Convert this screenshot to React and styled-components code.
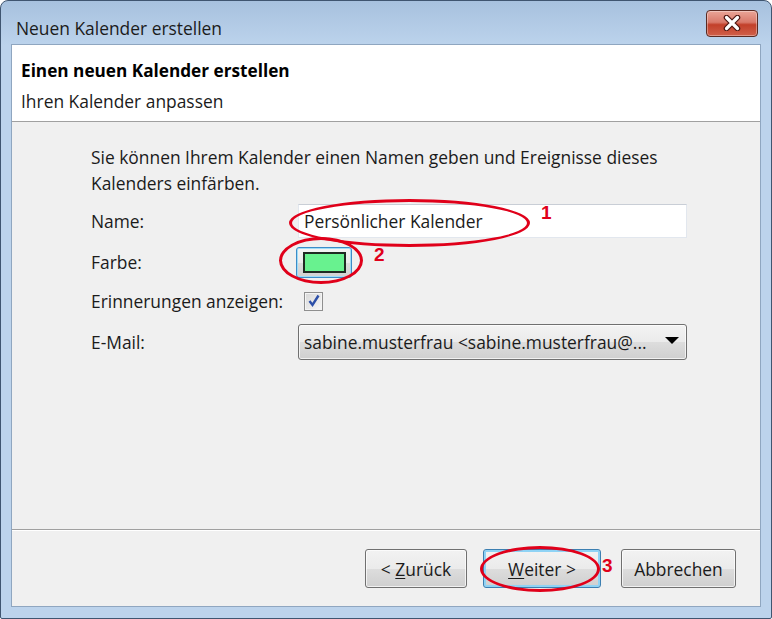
import React from 'react';
import styled, { createGlobalStyle } from 'styled-components';

const GlobalStyle = createGlobalStyle`
  html, body {
    margin: 0;
    padding: 0;
    background: #ffffff;
  }
  body {
    font-family: "Open Sans", "Noto Sans", sans-serif;
  }
`;

function App() {
  return (
    <>
      <GlobalStyle />
      <Window>
        <TitleBar>
          <Caption>Neuen Kalender erstellen</Caption>
          <CloseButton aria-label="Schließen">
            <svg width="18" height="16" viewBox="0 0 18 16">
              <path d="M3.5 2.5 L14.5 13.5 M14.5 2.5 L3.5 13.5" stroke="#4a1510" strokeWidth="5.5" strokeLinecap="round" />
              <path d="M3.5 2.5 L14.5 13.5 M14.5 2.5 L3.5 13.5" stroke="#ffffff" strokeWidth="3.2" strokeLinecap="round" />
            </svg>
          </CloseButton>
        </TitleBar>

        <Client>
          <Header>
            <HeaderTitle>Einen neuen Kalender erstellen</HeaderTitle>
            <HeaderSub>Ihren Kalender anpassen</HeaderSub>
          </Header>

          <Body>
            <Intro>
              Sie können Ihrem Kalender einen Namen geben und Ereignisse dieses
              <br />
              Kalenders einfärben.
            </Intro>
            <Form>
              <Label>Name:</Label>
              <TextInput defaultValue="Persönlicher Kalender" />

              <Label>Farbe:</Label>
              <ColorButton>
                <Swatch color="#68f28f" />
              </ColorButton>

              <Label>Erinnerungen anzeigen:</Label>
              <Checkbox>
                <svg width="14" height="14" viewBox="0 0 14 14">
                  <path d="M2.5 7 L5.5 11 L11.5 1.5" fill="none" stroke="#2c4fa8" strokeWidth="2.4" />
                </svg>
              </Checkbox>

              <Label>E-Mail:</Label>
              <Select>
                <span>sabine.musterfrau &lt;sabine.musterfrau@...</span>
                <Arrow />
              </Select>
            </Form>
          </Body>

          <Footer>
            <Button width={102}>
              {'< '}
              <u>Z</u>urück
            </Button>
            <Button width={118} focused>
              <u>W</u>eiter {'>'}
            </Button>
            <Button width={115} spaced>
              Abbrechen
            </Button>
          </Footer>
        </Client>

        <Ring left={288} top={198} w={241} h={48} />
        <Marker left={540} top={201}>1</Marker>
        <Ring left={278} top={236} w={84} h={47} />
        <Marker left={373} top={243}>2</Marker>
        <Ring left={479} top={545} w={120} h={46} />
        <Marker left={601} top={554}>3</Marker>
      </Window>
    </>
  );
}
export default App;

const Window = styled.div`
  position: relative;
  width: 772px;
  height: 619px;
  box-sizing: border-box;
  display: flex;
  flex-direction: column;
  background: linear-gradient(#a7c1de 0px, #bcd3ec 44px, #bcd3ec 100%);
  border: 1px solid #3f5570;
  border-radius: 8px 8px 2px 2px;
  overflow: hidden;
`;

const TitleBar = styled.div`
  height: 43px;
  display: flex;
  align-items: center;
  justify-content: space-between;
  padding: 0 13px 0 15px;
`;

const Caption = styled.div`
  font-size: 17.4px;
  color: #1b1b1b;
  margin-top: 10px;
`;

const CloseButton = styled.div`
  width: 52px;
  height: 27px;
  margin-top: 1px;
  box-sizing: border-box;
  border: 1px solid #5a2a22;
  border-radius: 4px;
  background: linear-gradient(#eaa597 0%, #d9796a 45%, #c2402a 55%, #d0604a 100%);
  display: flex;
  align-items: center;
  justify-content: center;
  box-shadow: inset 0 0 0 1px rgba(255, 255, 255, 0.35);
`;

const Client = styled.div`
  flex: 1;
  margin: 0 10px 11px 10px;
  display: flex;
  flex-direction: column;
  background: #f0f0f0;
  border: 1px solid #8fa6c0;
`;

const Header = styled.div`
  height: 77px;
  box-sizing: border-box;
  background: #ffffff;
  border-bottom: 1px solid #a0a0a0;
  padding: 14px 0 0 9px;
`;

const HeaderTitle = styled.div`
  font-size: 17.2px;
  font-weight: 700;
  color: #000000;
  line-height: 24px;
`;

const HeaderSub = styled.div`
  font-size: 17.4px;
  color: #1b1b1b;
  line-height: 24px;
  margin-top: 6px;
`;

const Body = styled.div`
  flex: 1;
  padding: 22px 0 0 79px;
`;

const Intro = styled.p`
  margin: 0;
  font-size: 17.4px;
  line-height: 26px;
  color: #1b1b1b;
`;

const Form = styled.div`
  display: grid;
  grid-template-columns: 207px 389px;
  grid-template-rows: 38px 44px 34px 48px;
  align-items: center;
  margin-top: 6px;
`;

const Label = styled.div`
  font-size: 17.4px;
  color: #1b1b1b;
`;

const TextInput = styled.input`
  height: 34px;
  box-sizing: border-box;
  border: 1px solid #e2e7ee;
  border-top-color: #c9ced6;
  background: #ffffff;
  font-family: inherit;
  font-size: 17.4px;
  color: #1b1b1b;
  padding: 0 5px;
  outline: none;
`;

const ColorButton = styled.div`
  width: 56px;
  height: 31px;
  box-sizing: border-box;
  margin-left: -2px;
  border: 1px solid #3c8cc8;
  border-radius: 3px;
  background: linear-gradient(#f4f4f4 0%, #ebebeb 50%, #dcdcdc 51%, #d2d2d2 100%);
  display: flex;
  align-items: center;
  justify-content: center;
  box-shadow: inset 0 0 0 1px #9fdcf7;
`;

const Swatch = styled.div`
  width: 43px;
  height: 21px;
  box-sizing: border-box;
  border: 2px solid #1f2a22;
  background: ${(p) => p.color};
`;

const Checkbox = styled.div`
  width: 19px;
  height: 19px;
  margin-left: 6px;
  box-sizing: border-box;
  border: 1px solid #8f8f8f;
  background: linear-gradient(135deg, #d8d8d8, #f7f7f7);
  box-shadow: inset 0 0 0 1px #f4f4f4;
  display: flex;
  align-items: center;
  justify-content: center;
`;

const Select = styled.div`
  height: 36px;
  box-sizing: border-box;
  border: 1px solid #707070;
  border-radius: 3px;
  background: linear-gradient(#f3f3f3 0%, #ebebeb 50%, #dddddd 51%, #cfcfcf 100%);
  display: flex;
  align-items: center;
  justify-content: space-between;
  padding: 0 7px 0 5px;
  font-size: 17.4px;
  color: #1b1b1b;
  white-space: nowrap;
  box-shadow: inset 0 0 0 1px rgba(255, 255, 255, 0.7);
`;

const Arrow = styled.div`
  width: 0;
  height: 0;
  border-left: 7px solid transparent;
  border-right: 7px solid transparent;
  border-top: 7px solid #000000;
  margin-top: -3px;
`;

const Footer = styled.div`
  display: flex;
  justify-content: flex-end;
  align-items: center;
  gap: 16px;
  padding: 19px 24px 18px 0;
  border-top: 1px solid #a0a0a0;
  box-shadow: inset 0 1px 0 #ffffff;
`;

const Button = styled.div`
  width: ${(p) => p.width}px;
  height: 39px;
  margin-left: ${(p) => (p.spaced ? 4 : 0)}px;
  box-sizing: border-box;
  border: 1px solid ${(p) => (p.focused ? '#3c7fb1' : '#707070')};
  border-radius: 3px;
  background: linear-gradient(#f2f2f2 0%, #ebebeb 50%, #dddddd 51%, #cfcfcf 100%);
  box-shadow: inset 0 0 0 ${(p) => (p.focused ? '2px #8fd3f5' : '1px rgba(255,255,255,0.7)')};
  display: flex;
  align-items: center;
  justify-content: center;
  font-size: 17.4px;
  color: #1b1b1b;
  white-space: pre;

  u {
    text-underline-offset: 2px;
  }
`;

const Ring = styled.div`
  position: absolute;
  left: ${(p) => p.left}px;
  top: ${(p) => p.top}px;
  width: ${(p) => p.w}px;
  height: ${(p) => p.h}px;
  box-sizing: border-box;
  border: 3px solid #e0001a;
  border-radius: 50%;
  pointer-events: none;
`;

const Marker = styled.div`
  position: absolute;
  left: ${(p) => p.left}px;
  top: ${(p) => p.top}px;
  font-family: "Liberation Sans", Arial, sans-serif;
  font-weight: 700;
  font-size: 19px;
  color: #e0001a;
`;
